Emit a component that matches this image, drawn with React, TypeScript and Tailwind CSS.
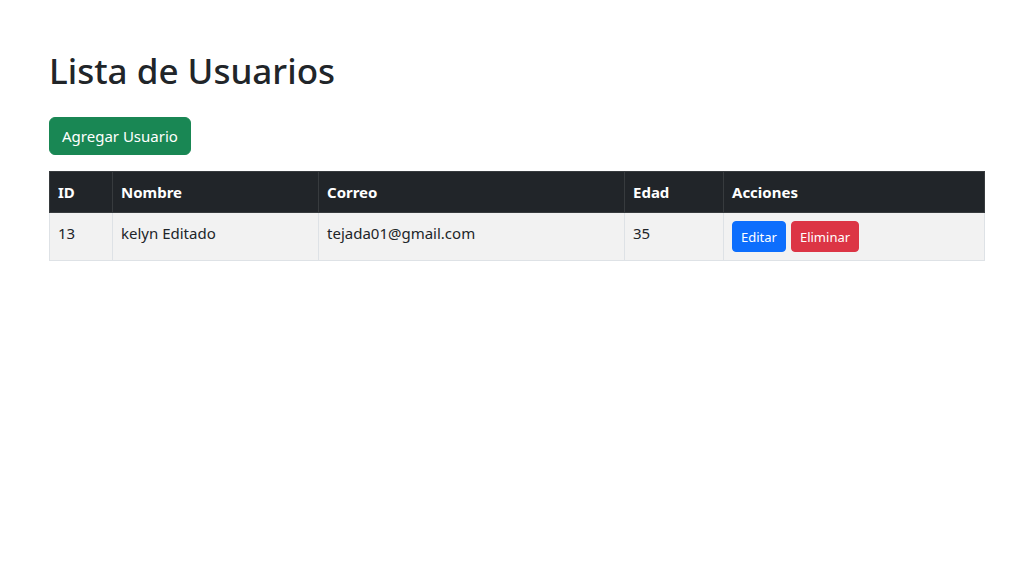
import React from 'react';

type Usuario = { id: number; nombre: string; correo: string; edad: number };

const usuarios: Usuario[] = [
  { id: 13, nombre: 'kelyn Editado', correo: 'tejada01@gmail.com', edad: 35 },
];

const App: React.FC = () => {
  return (
    <div className="min-h-screen bg-white text-[#212529] text-[15px] leading-6 font-['Noto_Sans','Open_Sans',sans-serif]">
      <div className="w-[960px] mx-auto px-3 pt-12">
        <h1 className="text-[35px] font-medium leading-[45px] mb-6">Lista de Usuarios</h1>
        <button className="h-[38px] px-3 rounded-md bg-[#198754] border border-[#198754] text-white text-[15px] leading-6 mb-4">
          Agregar Usuario
        </button>

        <table className="w-full table-fixed border-collapse text-left">
          <colgroup>
            <col className="w-[63px]" />
            <col className="w-[206px]" />
            <col className="w-[306px]" />
            <col className="w-[99px]" />
            <col />
          </colgroup>
          <thead>
            <tr className="bg-[#212529] text-white">
              <th className="border border-[#373b3e] px-2 py-2 font-bold">ID</th>
              <th className="border border-[#373b3e] px-2 py-2 font-bold">Nombre</th>
              <th className="border border-[#373b3e] px-2 py-2 font-bold">Correo</th>
              <th className="border border-[#373b3e] px-2 py-2 font-bold">Edad</th>
              <th className="border border-[#373b3e] px-2 py-2 font-bold">Acciones</th>
            </tr>
          </thead>
          <tbody>
            {usuarios.map((u) => (
              <tr key={u.id} className="bg-[#f2f2f2] align-top">
                <td className="border border-[#dee2e6] px-2 py-2">{u.id}</td>
                <td className="border border-[#dee2e6] px-2 py-2">{u.nombre}</td>
                <td className="border border-[#dee2e6] px-2 py-2">{u.correo}</td>
                <td className="border border-[#dee2e6] px-2 py-2">{u.edad}</td>
                <td className="border border-[#dee2e6] px-2 py-2">
                  <div className="flex gap-[5px]">
                    <button className="h-[31px] px-2 rounded bg-[#0d6efd] border border-[#0d6efd] text-white text-[13px]">
                      Editar
                    </button>
                    <button className="h-[31px] px-2 rounded bg-[#dc3545] border border-[#dc3545] text-white text-[13px]">
                      Eliminar
                    </button>
                  </div>
                </td>
              </tr>
            ))}
          </tbody>
        </table>
      </div>
    </div>
  );
};

export default App;
